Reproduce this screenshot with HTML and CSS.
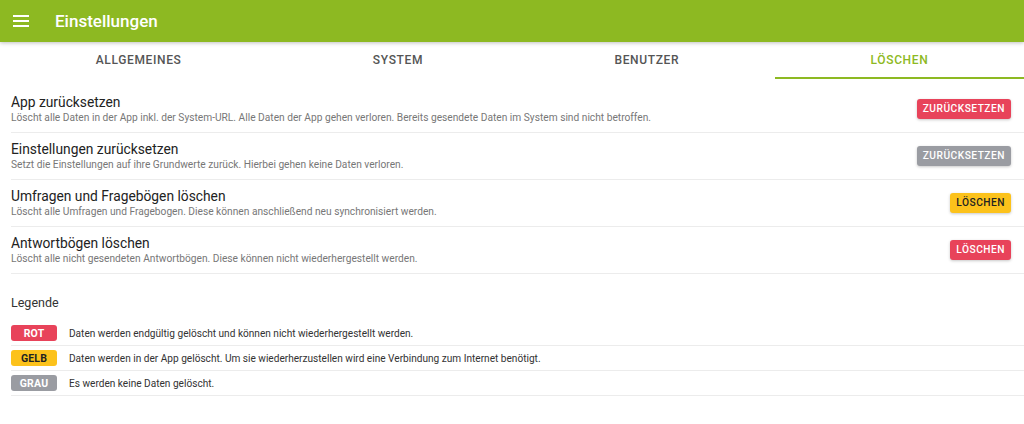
FILE: index.html
```html
<!DOCTYPE html>
<html lang="de">
<head>
<meta charset="utf-8">
<title>Einstellungen</title>
<link rel="stylesheet" href="styles.css">
</head>
<body>
<header class="appbar">
  <svg class="menu-icon" width="16" height="12" viewBox="0 0 16 12" aria-hidden="true">
    <rect x="0" y="0" width="16" height="2" fill="#fff"/>
    <rect x="0" y="5" width="16" height="2" fill="#fff"/>
    <rect x="0" y="10" width="16" height="2" fill="#fff"/>
  </svg>
  <h1 class="appbar-title">Einstellungen</h1>
</header>
<nav class="tabs">
  <div class="tab">ALLGEMEINES</div>
  <div class="tab">SYSTEM</div>
  <div class="tab">BENUTZER</div>
  <div class="tab tab-active">LÖSCHEN</div>
</nav>
<main class="content">
  <ul class="list">
    <li class="row">
      <div class="row-text">
        <div class="row-title">App zurücksetzen</div>
        <div class="row-sub">Löscht alle Daten in der App inkl. der System-URL. Alle Daten der App gehen verloren. Bereits gesendete Daten im System sind nicht betroffen.</div>
      </div>
      <button class="btn btn-red">ZURÜCKSETZEN</button>
    </li>
    <li class="row">
      <div class="row-text">
        <div class="row-title">Einstellungen zurücksetzen</div>
        <div class="row-sub">Setzt die Einstellungen auf ihre Grundwerte zurück. Hierbei gehen keine Daten verloren.</div>
      </div>
      <button class="btn btn-gray">ZURÜCKSETZEN</button>
    </li>
    <li class="row">
      <div class="row-text">
        <div class="row-title">Umfragen und Fragebögen löschen</div>
        <div class="row-sub">Löscht alle Umfragen und Fragebogen. Diese können anschließend neu synchronisiert werden.</div>
      </div>
      <button class="btn btn-yellow">LÖSCHEN</button>
    </li>
    <li class="row">
      <div class="row-text">
        <div class="row-title">Antwortbögen löschen</div>
        <div class="row-sub">Löscht alle nicht gesendeten Antwortbögen. Diese können nicht wiederhergestellt werden.</div>
      </div>
      <button class="btn btn-red">LÖSCHEN</button>
    </li>
  </ul>
  <section class="legend">
    <h2 class="legend-title">Legende</h2>
    <div class="legend-row"><span class="badge badge-red">ROT</span><span class="legend-text">Daten werden endgültig gelöscht und können nicht wiederhergestellt werden.</span></div>
    <div class="legend-row"><span class="badge badge-yellow">GELB</span><span class="legend-text">Daten werden in der App gelöscht. Um sie wiederherzustellen wird eine Verbindung zum Internet benötigt.</span></div>
    <div class="legend-row"><span class="badge badge-gray">GRAU</span><span class="legend-text">Es werden keine Daten gelöscht.</span></div>
  </section>
</main>
</body>
</html>
```
FILE: styles.css
```css
* { box-sizing: border-box; }
html, body { margin: 0; padding: 0; }
body {
  font-family: Roboto, "Liberation Sans", sans-serif;
  background: #fff;
  color: #222;
  width: 1024px;
  height: 424px;
  overflow: hidden;
}
.appbar {
  height: 42px;
  background: #8db922;
  display: flex;
  align-items: center;
  padding-left: 13px;
  box-shadow: 0 1px 4px rgba(0,0,0,0.25);
  position: relative;
  z-index: 2;
}
.menu-icon { display: block; }
.appbar-title {
  margin: 0 0 0 26px;
  font-size: 17px;
  font-weight: 500;
  color: #fff;
}
.tabs {
  display: flex;
  height: 37px;
}
.tab {
  flex: 1 1 auto;
  display: flex;
  align-items: center;
  justify-content: center;
  font-size: 12px;
  font-weight: 500;
  letter-spacing: 0.65px;
  color: #555;
  padding-top: 1px;
  border-bottom: 2px solid transparent;
}
.tab-active {
  color: #8db922;
  border-bottom-color: #8db922;
}
.content { padding-top: 7px; }
.list {
  list-style: none;
  margin: 0 0 0 11px;
  padding: 0;
}
.row {
  display: flex;
  align-items: center;
  justify-content: space-between;
  height: 47px;
  padding: 0 13px 1px 0;
  border-bottom: 1px solid #ececec;
}
.row-text { display: flex; flex-direction: column; }
.row-title {
  font-size: 13.8px;
  line-height: 18px;
  color: #222;
}
.row-sub {
  font-size: 10.2px;
  line-height: 14px;
  color: #777;
}
.btn {
  border: none;
  border-radius: 3px;
  height: 20px;
  padding: 0 6px;
  font-family: inherit;
  font-size: 10.2px;
  font-weight: 500;
  letter-spacing: 0.5px;
  color: #fff;
  box-shadow: 0 1px 3px rgba(0,0,0,0.22);
}
.btn-red { background: #e8435a; }
.btn-gray { background: #9a9ca2; }
.btn-yellow { background: #fcc21b; color: #222; }
.legend {
  margin-left: 11px;
  padding-top: 20px;
}
.legend-title {
  margin: 0 0 9px 0;
  font-size: 12.5px;
  line-height: 18px;
  font-weight: 400;
  color: #333;
}
.legend-row {
  display: flex;
  align-items: center;
  height: 25px;
  border-bottom: 1px solid #ececec;
}
.badge {
  width: 46px;
  height: 16px;
  border-radius: 3px;
  display: flex;
  align-items: center;
  justify-content: center;
  font-size: 10.5px;
  font-weight: 700;
  color: #fff;
  letter-spacing: 0.2px;
}
.badge-red { background: #e8435a; }
.badge-yellow { background: #fcc21b; color: #222; }
.badge-gray { background: #9a9ca2; }
.legend-text {
  margin-left: 12px;
  font-size: 10.1px;
  color: #333;
}
```
